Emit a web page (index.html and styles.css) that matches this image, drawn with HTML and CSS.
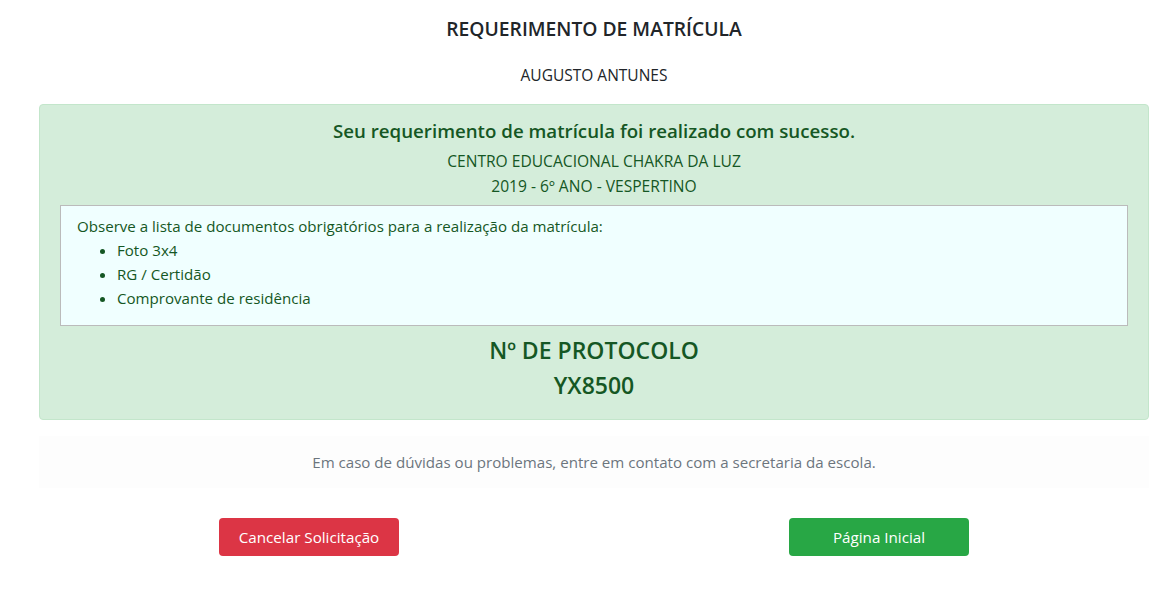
FILE: index.html
```
<!DOCTYPE html>
<html lang="pt-BR">
<head>
    <meta charset="UTF-8">
    <meta name="viewport" content="width=device-width, initial-scale=1.0">
    <title>Requerimento de Matrícula</title>
    <link rel="stylesheet" href="styles.css">
</head>
<body>

    <div class="container">
        <h1 class="title">REQUERIMENTO DE MATRÍCULA</h1>
        <p class="student">AUGUSTO ANTUNES</p>

        <div class="alert-success">
            <h2 class="alert-heading">Seu requerimento de matrícula foi realizado com sucesso.</h2>
            <p class="alert-line">CENTRO EDUCACIONAL CHAKRA DA LUZ</p>
            <p class="alert-line">2019 - 6º ANO - VESPERTINO</p>

            <div class="docs-box">
                <p>Observe a lista de documentos obrigatórios para a realização da matrícula:</p>
                <ul>
                    <li>Foto 3x4</li>
                    <li>RG / Certidão</li>
                    <li>Comprovante de residência</li>
                </ul>
            </div>

            <div class="protocol">
                <div>Nº DE PROTOCOLO</div>
                <div>YX8500</div>
            </div>
        </div>

        <div class="help">
            Em caso de dúvidas ou problemas, entre em contato com a secretaria da escola.
        </div>

        <div class="row">
            <div class="col">
                <button class="button button-danger">Cancelar Solicitação</button>
            </div>
            <div class="col">
                <button class="button button-success">Página Inicial</button>
            </div>
        </div>
    </div>

</body>
</html>
```

FILE: styles.css
```
body {
    font-family: 'Open Sans', 'Noto Sans', sans-serif;
    font-size: 15px;
    line-height: 1.5;
    color: #212529;
    background-color: #fff;
    margin: 0;
    padding: 0;
}
.container {
    width: 1110px;
    margin-left: 39px;
    padding-top: 15px;
}
.title {
    font-size: 19.3px;
    font-weight: 600;
    line-height: 28px;
    text-align: center;
    margin: 0 0 22px 0;
}
.student {
    font-size: 15.5px;
    line-height: 21px;
    text-align: center;
    margin: 0 0 18px 0;
}
.alert-success {
    background-color: #d4edda;
    border: 1px solid #c3e6cb;
    border-radius: 4px;
    color: #155724;
    padding: 14px 20px 16px 20px;
    text-align: center;
}
.alert-heading {
    font-size: 18.7px;
    font-weight: 600;
    line-height: 24px;
    margin: 0 0 6px 0;
}
.alert-line {
    font-size: 15.6px;
    line-height: 25px;
    margin: 0;
}
.docs-box {
    background-color: #f0ffff;
    border: 1px solid #bbb;
    text-align: left;
    padding: 8px 16px;
    margin-top: 6px;
    font-size: 15.1px;
    line-height: 24px;
}
.docs-box p {
    margin: 0;
}
.docs-box ul {
    margin: 0 0 7px 0;
    padding-left: 40px;
}
.protocol {
    font-size: 23px;
    font-weight: 600;
    line-height: 35px;
    margin-top: 7px;
}
.help {
    background-color: #fdfdfd;
    color: #6c757d;
    text-align: center;
    font-size: 15.1px;
    line-height: 52px;
    margin-top: 16px;
}
.row {
    display: flex;
    margin: 30px -15px 0 -15px;
}
.col {
    flex: 1;
    display: flex;
    justify-content: center;
}
.button {
    width: 180px;
    height: 38px;
    font-family: inherit;
    font-size: 15.2px;
    color: #fff;
    border: none;
    border-radius: 4px;
    cursor: pointer;
}
.button-danger {
    background-color: #dc3545;
}
.button-success {
    background-color: #28a745;
}
```
